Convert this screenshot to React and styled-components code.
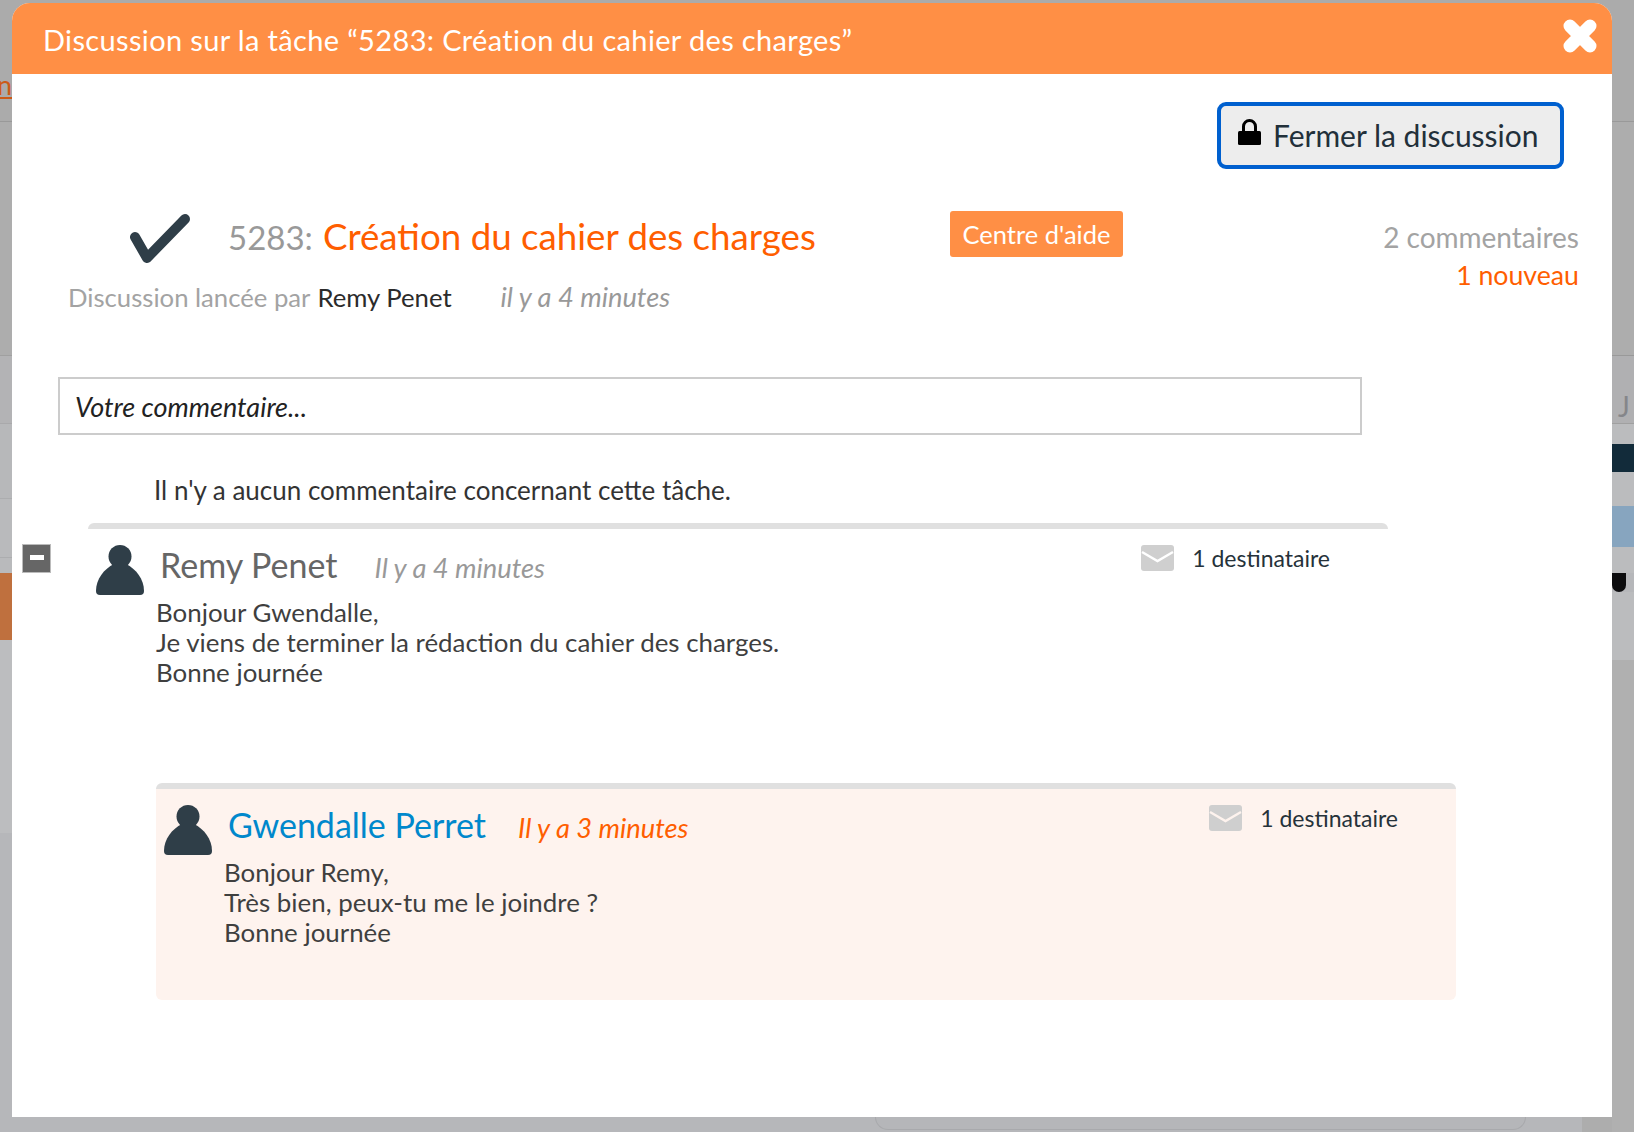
import React from "react";
import styled, { createGlobalStyle } from "styled-components";

const GlobalStyle = createGlobalStyle`
  html, body {
    margin: 0;
    padding: 0;
    background: #b6b7ba;
  }
  * {
    box-sizing: border-box;
  }
`;

const Page = styled.div`
  width: 1634px;
  height: 1132px;
  display: grid;
  grid-template-columns: 12px 1600px 22px;
  overflow: hidden;
  font-family: Lato, "Open Sans", sans-serif;
`;

const Strip = styled.div`
  display: flex;
  flex-direction: column;
  overflow: hidden;
`;

const Band = styled.div`
  height: ${props => props.$h}px;
  flex-shrink: 0;
  background: ${props => props.$bg};
`;

const CutLink = styled.div`
  height: 121px;
  flex-shrink: 0;
  background: #ababab;
  padding-top: 70px;
  display: flex;
  justify-content: flex-end;
  font-size: 27px;
  line-height: 30px;
  color: #cc5a18;
  text-decoration: underline;
`;

const CutLetter = styled.div`
  height: 34px;
  flex-shrink: 0;
  background: #b0b0b2;
  padding: 2px 0 0 6px;
  font-size: 28px;
  line-height: 30px;
  color: #85868a;
`;

const BlackMark = styled.div`
  height: 19px;
  width: 14px;
  flex-shrink: 0;
  background: #0c0c0e;
  border-radius: 0 0 7px 7px;
`;

const Center = styled.div`
  display: flex;
  flex-direction: column;
  background: #ababab;
`;

const Modal = styled.div`
  margin-top: 3px;
  height: 1114px;
  flex-shrink: 0;
  background: #fff;
  border-radius: 18px 18px 0 0;
  display: flex;
  flex-direction: column;
`;

const BelowModal = styled.div`
  flex: 1;
  display: flex;
  background: #b6b7ba;
`;

const BackCard = styled.div`
  margin-left: 863px;
  width: 651px;
  height: 13px;
  background: #b5b6b9;
  border: 1px solid #a8a9ac;
  border-top: none;
  border-radius: 0 0 20px 20px;
`;

const BackEdge = styled.div`
  margin-left: auto;
  width: 30px;
  background: #adadad;
`;

const ModalHeader = styled.header`
  height: 71px;
  flex-shrink: 0;
  background: #ff8f45;
  border-radius: 18px 18px 0 0;
  padding: 0 15px 0 31px;
  display: flex;
  align-items: center;
  justify-content: space-between;
`;

const HeaderTitle = styled.h1`
  margin: 1px 0 0;
  font-size: 29px;
  font-weight: 400;
  color: #fff;
  letter-spacing: 0.35px;
  white-space: nowrap;
`;

const CloseIcon = styled.svg`
  width: 34px;
  height: 34px;
  margin-top: -5px;
`;

const Toolbar = styled.div`
  display: flex;
  justify-content: flex-end;
  padding: 28px 48px 0 0;
`;

const CloseButton = styled.button`
  width: 347px;
  height: 67px;
  border: 4px solid #0060cf;
  border-radius: 9px;
  background: #ededed;
  display: flex;
  align-items: center;
  gap: 12px;
  padding: 0 0 2px 17px;
  font-family: inherit;
  font-size: 30px;
  color: #22303a;
  white-space: nowrap;
`;

const LockIcon = styled.svg`
  width: 23px;
  height: 26px;
  margin-top: -5px;
`;

const TaskHead = styled.div`
  display: grid;
  grid-template-columns: 938px 173px 1fr;
  margin-top: 42px;
  padding-right: 33px;
`;

const TaskLeft = styled.div`
  display: flex;
  flex-direction: column;
`;

const TitleRow = styled.div`
  height: 55px;
  display: flex;
  align-items: center;
  padding-left: 118px;
`;

const CheckIcon = styled.svg`
  width: 62px;
  height: 52px;
  margin-right: 36px;
  flex-shrink: 0;
`;

const TaskTitle = styled.h2`
  margin: -6px 0 0;
  font-size: 36.7px;
  font-weight: 400;
  color: #ff5e00;
  white-space: nowrap;
`;

const TaskId = styled.span`
  display: inline-block;
  width: 95px;
  font-size: 33px;
  color: #999;
`;

const Starter = styled.div`
  margin-top: 16px;
  padding-left: 56px;
  display: flex;
  align-items: baseline;
  font-size: 25.7px;
  line-height: 30px;
  color: #a3a3a3;
  white-space: nowrap;
`;

const StarterName = styled.span`
  color: #2b2b2b;
  margin-left: 7px;
`;

const Ago = styled.span`
  font-style: italic;
  color: ${props => props.$color || "#999"};
  font-size: 27.3px;
  margin-left: ${props => props.$gap}px;
`;

const HelpButton = styled.div`
  height: 46px;
  background: #ff8f45;
  border-radius: 3px;
  color: #fff;
  font-size: 25.5px;
  display: flex;
  align-items: center;
  justify-content: center;
  white-space: nowrap;
`;

const Counts = styled.div`
  padding-top: 8px;
  text-align: right;
  font-size: 28px;
  line-height: 37px;
  color: #a3a3a3;
  white-space: nowrap;
`;

const NewCount = styled.div`
  color: #ff5e00;
  font-size: 26.7px;
  margin-top: 1px;
`;

const CommentInput = styled.input`
  display: block;
  margin: 65px 0 0 46px;
  width: 1304px;
  height: 58px;
  border: 2px solid #ccc;
  border-radius: 0;
  padding: 0 15px;
  font-family: inherit;
  font-size: 27px;
  font-style: italic;
  outline: none;

  &::placeholder {
    color: #222;
    opacity: 1;
  }
`;

const NoComment = styled.p`
  margin: 40px 0 18px;
  padding-left: 142px;
  font-size: 26px;
  line-height: 30px;
  color: #333;
`;

const Thread = styled.div`
  display: flex;
  align-items: flex-start;
  padding-left: 10px;
`;

const ToggleBox = styled.div`
  width: 29px;
  height: 29px;
  margin: 21px 37px 0 0;
  flex-shrink: 0;
  background: #666;
  border: 1px solid #bbb;
  display: flex;
  align-items: center;
  justify-content: center;
  padding-bottom: 3px;

  &::before {
    content: "";
    width: 14px;
    height: 5px;
    background: #fff;
  }
`;

const Comment = styled.article`
  width: 1300px;
  flex-shrink: 0;
  background: ${props => props.$bg || "transparent"};
  border-top: 6px solid #e0e0e0;
  border-radius: 6px;
  padding: 16px 58px 53px 8px;
  margin-left: ${props => props.$indent || 0}px;
  margin-top: ${props => props.$top || 0}px;
`;

const CommentHead = styled.div`
  height: 50px;
  display: flex;
`;

const Avatar = styled.svg`
  width: 48px;
  height: 50px;
  flex-shrink: 0;
`;

const AuthorLine = styled.div`
  display: flex;
  align-items: baseline;
  margin: -1px 0 0 16px;
  white-space: nowrap;
`;

const Author = styled.span`
  font-size: 34px;
  line-height: 42px;
  color: ${props => props.$color};
`;

const Recipients = styled.div`
  margin-left: auto;
  display: flex;
  align-items: center;
  gap: 18px;
  height: 26px;
  font-size: 23px;
  color: #26323a;
  white-space: nowrap;
`;

const MailIcon = styled.svg`
  width: 33px;
  height: 26px;
  filter: blur(0.4px);
`;

const CommentBody = styled.div`
  margin: 2px 0 0 60px;
  font-size: 25.9px;
  line-height: 30px;
  color: #3f3f3f;
`;

const leftBands = [
  { h: 1, bg: "#999" },
  { h: 233, bg: "#adadad" },
  { h: 1, bg: "#a0a0a0" },
  { h: 67, bg: "#b3b3b5" },
  { h: 1, bg: "#a9a9ab" },
  { h: 74, bg: "#b7b8ba" },
  { h: 1, bg: "#acadaf" },
  { h: 58, bg: "#b9babc" },
  { h: 1, bg: "#acadaf" },
  { h: 15, bg: "#b9babc" },
  { h: 67, bg: "#bf703e" },
  { h: 193, bg: "#bcbdbf" },
  { h: 299, bg: "#b6b7ba" },
];

const rightTop = [
  { h: 121, bg: "#ababab" },
  { h: 1, bg: "#999" },
  { h: 233, bg: "#adadad" },
  { h: 1, bg: "#999" },
  { h: 33, bg: "#b0b0b2" },
];

const rightBottom = [
  { h: 1, bg: "#a0a0a0" },
  { h: 20, bg: "#bbbcbe" },
  { h: 28, bg: "#122b3a" },
  { h: 34, bg: "#bbbcbe" },
  { h: 41, bg: "#87a5bf" },
  { h: 26, bg: "#bbbcbe" },
];

const MailGlyph = ({ flap }) => (
  <MailIcon viewBox="0 0 33 26">
    <rect x="0" y="0" width="33" height="26" rx="3" fill="#cfcfcf" />
    <path d="M1 7 L16.5 16 L32 7" fill="none" stroke={flap} strokeWidth="2.4" />
  </MailIcon>
);

const PersonGlyph = () => (
  <Avatar viewBox="0 0 48 50">
    <circle cx="24" cy="11.5" r="11.5" fill="#2f3e48" />
    <path
      d="M18 19 L30 19 C 40 24 48 34 48 46 Q48 50 44 50 L4 50 Q0 50 0 46 C0 34 8 24 18 19 Z"
      fill="#2f3e48"
    />
  </Avatar>
);

const App = () => {
  return (
    <>
      <GlobalStyle />
      <Page>
        <Strip>
          <CutLink>n</CutLink>
          {leftBands.map((b, i) => (
            <Band key={i} $h={b.h} $bg={b.bg} />
          ))}
        </Strip>

        <Center>
          <Modal>
            <ModalHeader>
              <HeaderTitle>Discussion sur la tâche “5283: Création du cahier des charges”</HeaderTitle>
              <CloseIcon viewBox="0 0 34 34">
                <path d="M7 7 L27 27 M27 7 L7 27" stroke="#fff" strokeWidth="13" strokeLinecap="round" />
              </CloseIcon>
            </ModalHeader>

            <Toolbar>
              <CloseButton>
                <LockIcon viewBox="0 0 23 26">
                  <path d="M5.500 13 V7.500 a6 6 0 0 1 12 0 V13" fill="none" stroke="#000" strokeWidth="3" />
                  <rect x="0" y="12" width="23" height="14" rx="1.500" fill="#000" />
                </LockIcon>
                Fermer la discussion
              </CloseButton>
            </Toolbar>

            <TaskHead>
              <TaskLeft>
                <TitleRow>
                  <CheckIcon viewBox="0 0 62 52">
                    <path d="M5 24 L17 45 L55 6" fill="none" stroke="#2f3e48" strokeWidth="10" strokeLinecap="round" strokeLinejoin="round" />
                  </CheckIcon>
                  <TaskTitle>
                    <TaskId>5283:</TaskId>Création du cahier des charges
                  </TaskTitle>
                </TitleRow>
                <Starter>
                  Discussion lancée par
                  <StarterName>Remy Penet</StarterName>
                  <Ago $gap={49}>il y a 4 minutes</Ago>
                </Starter>
              </TaskLeft>
              <HelpButton>Centre d'aide</HelpButton>
              <Counts>
                2 commentaires
                <NewCount>1 nouveau</NewCount>
              </Counts>
            </TaskHead>

            <CommentInput placeholder="Votre commentaire..." />
            <NoComment>Il n'y a aucun commentaire concernant cette tâche.</NoComment>

            <Thread>
              <ToggleBox />
              <Comment>
                <CommentHead>
                  <PersonGlyph />
                  <AuthorLine>
                    <Author $color="#666">Remy Penet</Author>
                    <Ago $gap={37}>Il y a 4 minutes</Ago>
                  </AuthorLine>
                  <Recipients>
                    <MailGlyph flap="#fff" />1 destinataire
                  </Recipients>
                </CommentHead>
                <CommentBody>
                  Bonjour Gwendalle,
                  <br />
                  Je viens de terminer la rédaction du cahier des charges.
                  <br />
                  Bonne journée
                </CommentBody>
              </Comment>
            </Thread>

            <Comment $bg="#fef3ee" $indent={144} $top={43}>
              <CommentHead>
                <PersonGlyph />
                <AuthorLine>
                  <Author $color="#0088cc">Gwendalle Perret</Author>
                  <Ago $gap={32} $color="#ff5e00">Il y a 3 minutes</Ago>
                </AuthorLine>
                <Recipients>
                  <MailGlyph flap="#fef3ee" />1 destinataire
                </Recipients>
              </CommentHead>
              <CommentBody>
                Bonjour Remy,
                <br />
                Très bien, peux-tu me le joindre ?
                <br />
                Bonne journée
              </CommentBody>
            </Comment>
          </Modal>
          <BelowModal>
            <BackCard />
            <BackEdge />
          </BelowModal>
        </Center>

        <Strip>
          {rightTop.map((b, i) => (
            <Band key={i} $h={b.h} $bg={b.bg} />
          ))}
          <CutLetter>J</CutLetter>
          {rightBottom.map((b, i) => (
            <Band key={i} $h={b.h} $bg={b.bg} />
          ))}
          <BlackMark />
          <Band $h={68} $bg="#bbbcbe" />
          <Band $h={472} $bg="#b0b0b0" />
        </Strip>
      </Page>
    </>
  );
};

export default App;
